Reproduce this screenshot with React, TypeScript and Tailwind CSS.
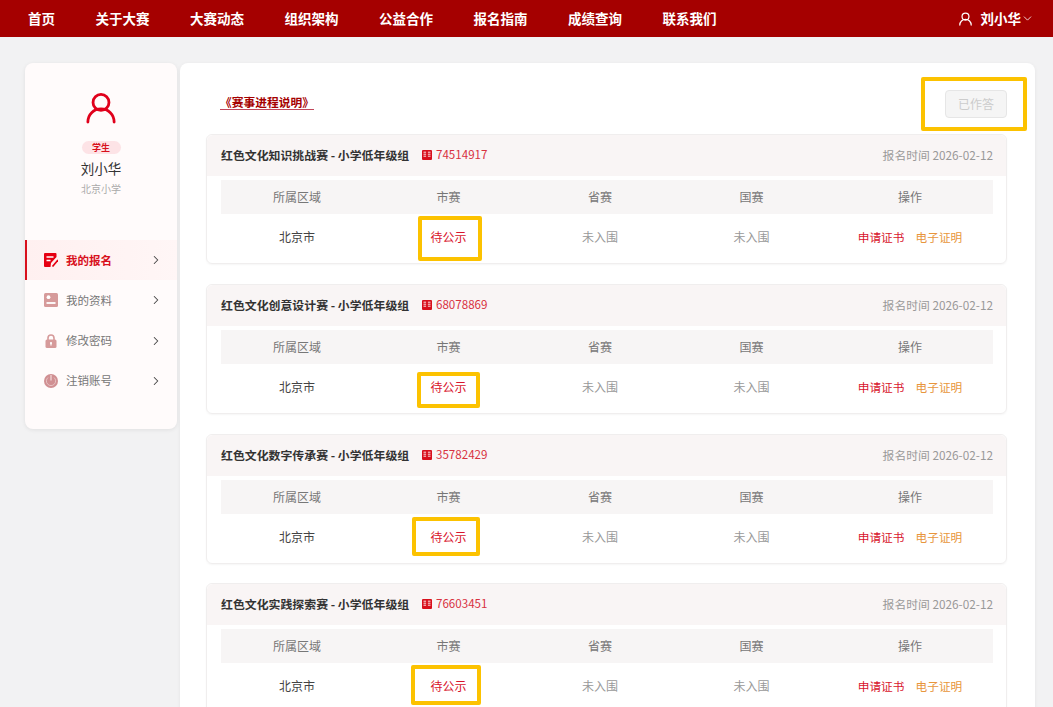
import { ChevronDown, ChevronRight } from 'lucide-react';

const navItems = ['首页', '关于大赛', '大赛动态', '组织架构', '公益合作', '报名指南', '成绩查询', '联系我们'];

const entries = [
  { title: '红色文化知识挑战赛 - 小学低年级组', no: '74514917', mark: 'left-[45px] top-[2px] w-[64px] h-[45px]', gap: 'mb-[20px]' },
  { title: '红色文化创意设计赛 - 小学低年级组', no: '68078869', mark: 'left-[44px] top-[8px] w-[63px] h-[36px]', gap: 'mb-[20px]' },
  { title: '红色文化数字传承赛 - 小学低年级组', no: '35782429', mark: 'left-[39px] top-[3px] w-[68px] h-[39px]', gap: 'mb-[19px]' },
  { title: '红色文化实践探索赛 - 小学低年级组', no: '76603451', mark: 'left-[38px] top-[2px] w-[70px] h-[40px]', gap: '' },
];

function UserIcon({ className }: { className: string }) {
  return (
    <svg viewBox="0 0 32 34" fill="none" stroke="currentColor" strokeWidth="3" strokeLinecap="round" className={className}>
      <circle cx="16" cy="11" r="8.5" />
      <path d="M2 32c0-8 6-14 14-14s14 6 14 14" />
    </svg>
  );
}

function MenuIcon({ name }: { name: string }) {
  if (name === 'edit') {
    return (
      <svg viewBox="0 0 14 14" className="w-[14px] h-[14px]">
        <path d="M1 0h10.5a1 1 0 0 1 1 1v3L7 10l-.5 4H1a1 1 0 0 1-1-1V1a1 1 0 0 1 1-1z" fill="#e60012" />
        <path d="M2.5 4h7M2.5 7.5h4" stroke="#fff" strokeWidth="1.3" />
        <path d="M8.5 13.5L14 7" stroke="#e60012" strokeWidth="1.7" />
      </svg>
    );
  }
  if (name === 'card') {
    return (
      <svg viewBox="0 0 14 14" className="w-[14px] h-[14px]">
        <rect width="14" height="14" rx="1.5" fill="#d69a9a" />
        <circle cx="4.5" cy="4.2" r="1.9" fill="#fff" />
        <path d="M2.5 10h9" stroke="#fff" strokeWidth="1.8" />
      </svg>
    );
  }
  if (name === 'lock') {
    return (
      <svg viewBox="0 0 14 14" className="w-[14px] h-[14px]">
        <path d="M4 6.5V4a3 3 0 0 1 6 0v2.5" fill="none" stroke="#d69a9a" strokeWidth="1.6" />
        <rect x="1.5" y="5.5" width="11" height="8.5" rx="1.5" fill="#d69a9a" />
        <circle cx="7" cy="9" r="1.1" fill="#fff" />
        <path d="M7 9v2.5" stroke="#fff" strokeWidth="1.2" />
      </svg>
    );
  }
  return (
    <svg viewBox="0 0 14 14" className="w-[14px] h-[14px]">
      <circle cx="7" cy="7" r="7" fill="#d08f92" />
      <path d="M4 3.5a4.6 4.6 0 1 0 6 0" fill="none" stroke="#e9c6c7" strokeWidth="0.9" />
      <path d="M7 1v5.5" stroke="#f3dcdc" strokeWidth="1.2" />
    </svg>
  );
}

const menu = [
  { icon: 'edit', label: '我的报名', active: true },
  { icon: 'card', label: '我的资料', active: false },
  { icon: 'lock', label: '修改密码', active: false },
  { icon: 'power', label: '注销账号', active: false },
];

function EntryCard({ title, no, mark, gap }: { title: string; no: string; mark: string; gap: string }) {
  return (
    <div className={`shrink-0 rounded-md border border-[#f0eeee] shadow-[0_1px_2px_rgba(0,0,0,0.04)] ${gap}`}>
      <div className="h-[41px] pl-[14px] pr-[13px] pb-[2px] flex items-center bg-[#f9f5f5] rounded-t-md">
        <span className="text-[11.9px] font-bold text-[#333] w-[188px] whitespace-nowrap">{title}</span>
        <svg viewBox="0 0 10 10" className="w-[10px] h-[10px] ml-[13px] mr-[4px]">
          <rect width="10" height="10" rx="1" fill="#d8101c" />
          <path d="M1.5 2.2h2.6M1.5 4.2h2.6M1.5 6.2h2.6M5.9 2.2h2.6M5.9 4.2h2.6M5.9 6.2h2.6" stroke="#fff" strokeWidth="0.9" />
        </svg>
        <span className="text-[11.6px] text-[#d8313f]">{no}</span>
        <span className="ml-auto text-[11.8px] text-[#999]">报名时间 2026-02-12</span>
      </div>
      <div className="pl-[14px] pr-[13px] pt-[4px]">
        <div className="grid grid-cols-[152px_151px_152px_151px_166px] h-[34px] items-center bg-[#f7f5f5] text-center text-[12px] text-[#777]">
          <span>所属区域</span>
          <span>市赛</span>
          <span>省赛</span>
          <span>国赛</span>
          <span>操作</span>
        </div>
        <div className="grid grid-cols-[152px_151px_152px_151px_166px] h-[49px] pb-[4px] items-center text-center text-[12px]">
          <span className="text-[#444]">北京市</span>
          <div className="relative h-full flex items-center justify-center text-[#d8142c]">
            待公示
            <div className={`absolute border-[4px] border-[#fcc200] rounded-[2px] ${mark}`} />
          </div>
          <span className="text-[#999]">未入围</span>
          <span className="text-[#999]">未入围</span>
          <div className="flex justify-center gap-[11px] text-[11.7px]">
            <span className="text-[#d8142c]">申请证书</span>
            <span className="text-[#e8963c]">电子证明</span>
          </div>
        </div>
      </div>
    </div>
  );
}

export default function App() {
  return (
    <div className="h-screen overflow-hidden flex flex-col bg-[#f2f2f3] font-['Noto_Sans_CJK_SC','Noto_Sans',sans-serif]">
      <header className="h-[37px] shrink-0 bg-[#a50000] flex items-center pl-[28px] pr-[19px] text-white">
        <nav className="flex gap-[40.5px] text-[13.5px] font-bold">
          {navItems.map((item) => (
            <span key={item}>{item}</span>
          ))}
        </nav>
        <div className="ml-auto flex items-center text-[13.5px] font-bold">
          <UserIcon className="w-[13px] h-[14px] mr-[9px]" />
          刘小华
          <ChevronDown size={13} strokeWidth={1.5} />
        </div>
      </header>

      <main className="flex-1 min-h-0 flex items-start gap-[3px] pl-[25px] pr-[18px] pt-[26px]">
        <aside className="w-[152px] h-[366px] shrink-0 rounded-lg bg-[#fffbfb] shadow-[0_1px_4px_rgba(0,0,0,0.08)] flex flex-col items-center pt-[29px]">
          <UserIcon className="w-[30px] h-[32px] text-[#e0001b]" />
          <span className="mt-[17px] w-[39px] h-[13px] leading-[13px] rounded-full bg-[#fde3e6] text-center text-[9px] font-bold text-[#d8101c]">学生</span>
          <span className="mt-[5px] text-[13.5px] leading-[18px] text-[#333]">刘小华</span>
          <span className="mt-[4px] text-[10px] leading-[15px] text-[#aaa]">北京小学</span>
          <ul className="mt-[44px] w-full">
            {menu.map((m) => (
              <li
                key={m.label}
                className={`h-[40.3px] flex items-center pl-[17px] pr-[14px] border-l-2 ${
                  m.active ? 'border-[#d8101c] bg-gradient-to-r from-[#fff0f0] to-[#fff6f6]' : 'border-transparent'
                }`}
              >
                <MenuIcon name={m.icon} />
                <span className={`ml-[8px] text-[11.5px] ${m.active ? 'font-bold text-[#d8101c]' : 'text-[#777]'}`}>{m.label}</span>
                <ChevronRight size={14} strokeWidth={1.8} className="ml-auto text-[#444]" />
              </li>
            ))}
          </ul>
        </aside>

        <section className="flex-1 min-w-0 h-[700px] rounded-t-lg bg-white shadow-[0_1px_4px_rgba(0,0,0,0.06)] pl-[26px] pr-[28px]">
          <div className="h-[71px] flex items-center pl-[14px]">
            <span className="mt-[8px] border-b border-[#c0475a] text-[11.75px] leading-[14px] font-bold text-[#a50000]">《赛事进程说明》</span>
            <div className="relative ml-auto mt-[10px] w-[62px] h-[28px] flex items-center justify-center rounded border border-[#e6e6e6] bg-[#f5f5f5] text-[12px] text-[#ccc]">
              已作答
              <div className="absolute left-[-25px] top-[-14px] w-[106px] h-[54px] border-[4px] border-[#fcc200] rounded-[2px]" />
            </div>
          </div>
          <div className="flex flex-col">
            {entries.map((e) => (
              <EntryCard key={e.no} {...e} />
            ))}
          </div>
        </section>
      </main>
    </div>
  );
}
